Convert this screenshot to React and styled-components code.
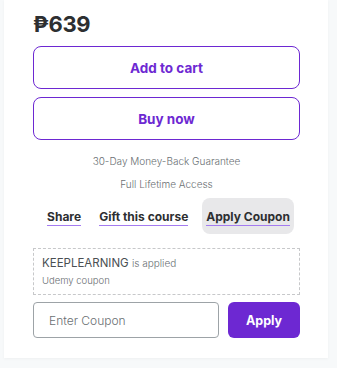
import React, { useState } from 'react'
import styled, { createGlobalStyle } from 'styled-components'

const GlobalStyle = createGlobalStyle`
  * { box-sizing: border-box; }
  body {
    margin: 0;
    background: #f7f9fa;
    font-family: Inter, "Noto Sans", sans-serif;
    color: #2d2f31;
  }
`

const Page = styled.div`
  padding: 0 9px 10px 4px;
`

const Card = styled.div`
  background: #fff;
  box-shadow: 0 1px 3px rgba(0, 0, 0, 0.04);
  padding: 9px 28px 20px 29px;
  display: flex;
  flex-direction: column;
`

const Price = styled.div`
  font-size: 22px;
  font-weight: 700;
  letter-spacing: -0.3px;
  line-height: 30px;
  margin-bottom: 7px;
`

const Button = styled.button`
  height: 43px;
  width: 100%;
  border: 1px solid #6d28d2;
  border-radius: 8px;
  background: ${p => (p.$filled ? '#6d28d2' : '#fff')};
  color: ${p => (p.$filled ? '#fff' : '#6d28d2')};
  font-family: inherit;
  font-size: 13.5px;
  font-weight: 700;
  cursor: pointer;
  margin-bottom: 8px;
`

const Notes = styled.div`
  margin-top: 2px;
`

const Note = styled.div`
  text-align: center;
  font-size: 10px;
  color: #6a6f73;
  line-height: 23px;
  font-weight: 300;
`

const Links = styled.div`
  display: flex;
  justify-content: center;
  gap: 10px;
  margin-top: 2px;
  margin-bottom: 14px;
  padding-left: 4px;
`

const LinkButton = styled.button`
  border: none;
  background: ${p => (p.$active ? '#e8e8ea' : 'transparent')};
  border-radius: 8px;
  padding: 0 4px;
  height: 36px;
  font-family: inherit;
  font-size: 12px;
  font-weight: 700;
  color: #2d2f31;
  cursor: pointer;

  span {
    border-bottom: 1px solid #a47bf0;
    padding-bottom: 1px;
  }
`

const Applied = styled.div`
  border: 1px dashed #c7c8ca;
  padding: 6px 8px 5px 8px;
  margin-bottom: 7px;
`

const Code = styled.div`
  font-size: 11.5px;
  color: #6a6f73;
  line-height: 17px;

  b {
    font-weight: 400;
    color: #4a4f53;
  }

  small {
    font-size: 10px;
    font-weight: 300;
  }
`

const Sub = styled.div`
  font-size: 9.5px;
  color: #6a6f73;
  font-weight: 300;
  line-height: 17px;
`

const Form = styled.div`
  display: flex;
  gap: 9px;
`

const Input = styled.input`
  flex: 1;
  min-width: 0;
  height: 36px;
  border: 1px solid #9da3a7;
  border-radius: 4px;
  padding: 0 15px;
  font-family: inherit;
  font-size: 12px;
  color: #2d2f31;

  &::placeholder {
    color: #6a6f73;
    font-weight: 300;
  }
`

const ApplyButton = styled.button`
  width: 72px;
  height: 36px;
  border: none;
  border-radius: 6px;
  background: #6d28d2;
  color: #fff;
  font-family: inherit;
  font-size: 12.5px;
  font-weight: 700;
  cursor: pointer;
`

export default function App() {
  const [coupon, setCoupon] = useState('')
  return (
    <Page>
      <GlobalStyle />
      <Card>
        <Price>₱639</Price>
        <Button>Add to cart</Button>
        <Button>Buy now</Button>
        <Notes>
          <Note>30-Day Money-Back Guarantee</Note>
          <Note>Full Lifetime Access</Note>
        </Notes>
        <Links>
          <LinkButton><span>Share</span></LinkButton>
          <LinkButton><span>Gift this course</span></LinkButton>
          <LinkButton $active><span>Apply Coupon</span></LinkButton>
        </Links>
        <Applied>
          <Code><b>KEEPLEARNING</b> <small>is applied</small></Code>
          <Sub>Udemy coupon</Sub>
        </Applied>
        <Form>
          <Input placeholder="Enter Coupon" value={coupon} onChange={e => setCoupon(e.target.value)} />
          <ApplyButton>Apply</ApplyButton>
        </Form>
      </Card>
    </Page>
  )
}
